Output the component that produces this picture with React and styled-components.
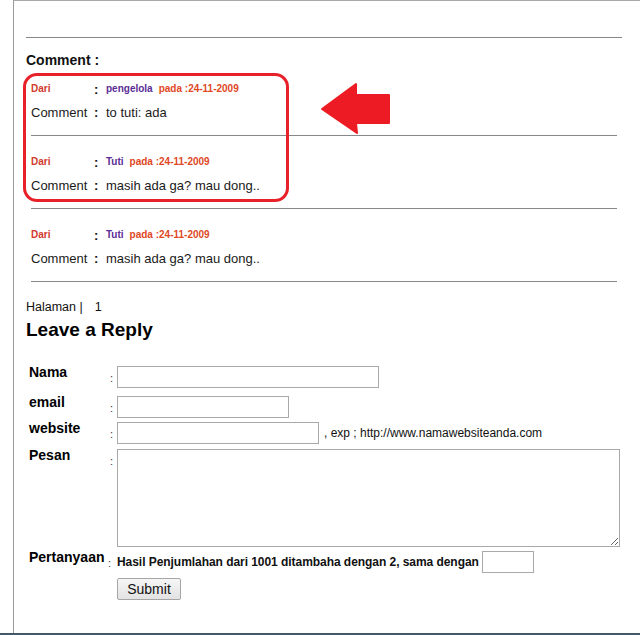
import React from "react";
import styled, { createGlobalStyle } from "styled-components";

const Global = createGlobalStyle`
  html, body { margin: 0; padding: 0; background: #fff; }
  body { font-family: "Liberation Sans", Arial, sans-serif; color: #111; }
`;

const Frame = styled.div`
  position: relative;
  width: 640px;
  height: 635px;
  overflow: hidden;
`;

const Page = styled.div`
  margin-left: 13px;
  height: 632px;
  border-left: 1px solid #9a9a9a;
  border-top: 1px solid #a8a8a8;
  padding: 0 18px 0 12px;
`;

const Footer = styled.div`
  height: 2px;
  background: #40596b;
`;

const Rule = styled.hr`
  border: 0;
  height: 1px;
  background: #878787;
  margin: ${(p) => p.$top || 0}px 0 0;
`;

const Heading = styled.div`
  font-weight: bold;
  font-size: 14px;
  line-height: 16px;
  margin-top: 14px;
`;

const Entry = styled.div`
  padding: 0 5px;
  margin-top: ${(p) => p.$top}px;
`;

const Row = styled.div`
  display: flex;
  align-items: baseline;
  margin-top: ${(p) => p.$top || 0}px;
  line-height: ${(p) => p.$lh}px;
`;

const Key = styled.span`
  width: 63px;
  font-size: ${(p) => (p.$small ? 10 : 13)}px;
  font-weight: ${(p) => (p.$small ? "bold" : "normal")};
  color: ${(p) => (p.$small ? "#d23a2c" : "#1a1a1a")};
`;

const Sep = styled.span`
  width: 12px;
  font-size: 13px;
  font-weight: bold;
  color: #111;
  position: relative;
  top: ${(p) => (p.$small ? 2 : 0)}px;
`;

const Name = styled.span`
  font-size: 10px;
  font-weight: bold;
  color: #5b2d96;
`;

const Date = styled.span`
  font-size: 10px;
  font-weight: bold;
  color: #e0481f;
  margin-left: 6px;
`;

const Body = styled.span`
  font-size: 13px;
  color: #1a1a1a;
`;

const Pager = styled.div`
  font-size: 12.5px;
  line-height: 14px;
  margin-top: 18px;
  color: #111;
  span { margin-left: 12px; }
`;

const Title = styled.h2`
  margin: 5px 0 0;
  font-size: 19px;
  line-height: 22px;
  font-weight: bold;
  color: #000;
`;

const Form = styled.form`
  margin-top: 25px;
  padding-left: 3px;
  display: flex;
  flex-direction: column;
`;

const FormRow = styled.div`
  display: flex;
  align-items: flex-start;
  margin-top: ${(p) => p.$top || 0}px;
`;

const Label = styled.div`
  width: 79px;
  flex: none;
  font-size: 14px;
  font-weight: bold;
  line-height: 16px;
  margin-top: -2px;
  color: #000;
`;

const Colon = styled.div`
  width: 9px;
  flex: none;
  font-size: 11px;
  line-height: 12px;
  padding-left: ${(p) => p.$pad ?? 2}px;
  box-sizing: border-box;
  margin-top: 6px;
  color: #333;
`;

const Field = styled.input`
  box-sizing: border-box;
  width: ${(p) => p.$w}px;
  height: 22px;
  border: 1px solid #a9a9a9;
  padding: 1px 3px;
  margin: 0;
  background: #fff;
  font-family: inherit;
  font-size: 13px;
`;

const Area = styled.textarea`
  box-sizing: border-box;
  width: 503px;
  height: 98px;
  border: 1px solid #a9a9a9;
  margin: 0;
  padding: 2px;
  font-family: inherit;
`;

const Hint = styled.span`
  font-size: 12px;
  line-height: 22px;
  margin-left: 5px;
  color: #111;
`;

const Question = styled.div`
  display: flex;
  align-items: center;
  gap: 3px;
  font-size: 12px;
  font-weight: bold;
  letter-spacing: -0.05px;
  color: #111;
`;

const Submit = styled.button`
  margin-left: 88px;
  width: 64px;
  height: 22px;
  padding: 0;
  border: 1px solid #a6a6a6;
  border-radius: 2px;
  background: linear-gradient(#f6f6f6, #e2e2e2);
  font-family: inherit;
  font-size: 14px;
  color: #111;
`;

const Highlight = styled.div`
  position: absolute;
  left: 23px;
  top: 73px;
  width: 266px;
  height: 129px;
  box-sizing: border-box;
  border: 3px solid #e8202a;
  border-radius: 14px;
  pointer-events: none;
`;

const ArrowMark = styled.svg`
  position: absolute;
  left: 318px;
  top: 80px;
`;

const comments = [
  { name: "pengelola", text: "to tuti: ada" },
  { name: "Tuti", text: "masih ada ga? mau dong.." },
  { name: "Tuti", text: "masih ada ga? mau dong.." },
];

export default function App() {
  return (
    <Frame>
      <Global />
      <Page>
        <Rule $top={36} />
        <Heading>Comment :</Heading>
        {comments.map((c, i) => (
          <Entry key={i} $top={i === 0 ? 13 : 18}>
            <Row $lh={14}>
              <Key $small>Dari</Key>
              <Sep $small>:</Sep>
              <Name>{c.name}</Name>
              <Date>pada :24-11-2009</Date>
            </Row>
            <Row $lh={16} $top={9}>
              <Key>Comment</Key>
              <Sep>:</Sep>
              <Body>{c.text}</Body>
            </Row>
            <Rule $top={14} />
          </Entry>
        ))}
        <Pager>
          Halaman |<span>1</span>
        </Pager>
        <Title>Leave a Reply</Title>
        <Form onSubmit={(e) => e.preventDefault()}>
          <FormRow>
            <Label>Nama</Label>
            <Colon>:</Colon>
            <Field $w={262} />
          </FormRow>
          <FormRow $top={8}>
            <Label>email</Label>
            <Colon>:</Colon>
            <Field $w={172} />
          </FormRow>
          <FormRow $top={4}>
            <Label>website</Label>
            <Colon>:</Colon>
            <Field $w={202} />
            <Hint>, exp ; http://www.namawebsiteanda.com</Hint>
          </FormRow>
          <FormRow $top={5}>
            <Label>Pesan</Label>
            <Colon>:</Colon>
            <Area />
          </FormRow>
          <FormRow $top={4}>
            <Label>Pertanyaan</Label>
            <Colon $pad={0}>:</Colon>
            <Question>
              Hasil Penjumlahan dari 1001 ditambaha dengan 2, sama dengan
              <Field $w={52} />
            </Question>
          </FormRow>
          <FormRow $top={5}>
            <Submit type="submit">Submit</Submit>
          </FormRow>
        </Form>
      </Page>
      <Footer />
      <Highlight />
      <ArrowMark width="76" height="58" viewBox="0 0 76 58">
        <polygon
          points="4,29 38,4 38,15 71,15 71,43 38,43 39,53"
          fill="#ed1c24"
          stroke="#ed1c24"
          strokeWidth="2"
          strokeLinejoin="round"
        />
      </ArrowMark>
    </Frame>
  );
}
